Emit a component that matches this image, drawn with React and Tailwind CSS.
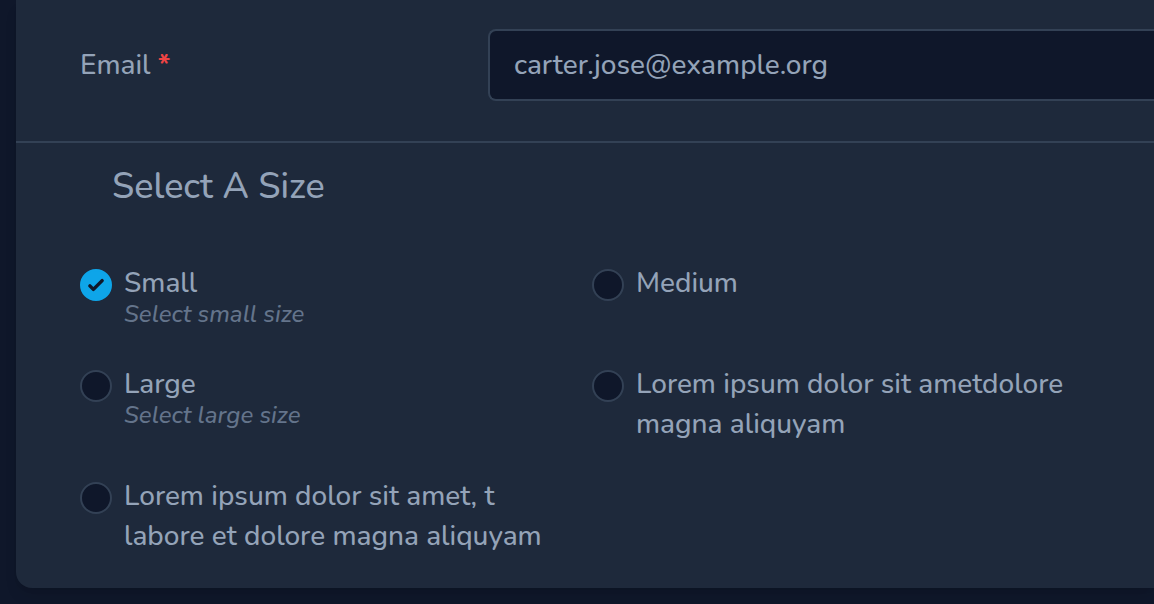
import React from "react";

const sizes = [
  { value: "small", label: "Small", help: "Select small size" },
  { value: "medium", label: "Medium" },
  { value: "large", label: "Large", help: "Select large size" },
  { value: "lorem-short", label: "Lorem ipsum dolor sit ametdolore magna aliquyam" },
  { value: "lorem-long", label: "Lorem ipsum dolor sit amet, t labore et dolore magna aliquyam" },
];

function SizeOption({ option, defaultChecked }) {
  return (
    <label className="flex items-start gap-3 pr-8 pb-8">
      <span className="mt-[6px] grid shrink-0 place-items-center">
        <input
          type="radio"
          name="size"
          value={option.value}
          defaultChecked={defaultChecked}
          className="peer col-start-1 row-start-1 size-8 appearance-none rounded-full border-2 border-[#334155] bg-[#0f172a] checked:border-[#0ea5e9] checked:bg-[#0ea5e9]"
        />
        <svg
          viewBox="0 0 16 16"
          aria-hidden="true"
          className="pointer-events-none invisible col-start-1 row-start-1 size-7 fill-[#0f172a] peer-checked:visible"
        >
          <path d="M12.207 4.793a1 1 0 010 1.414l-5 5a1 1 0 01-1.414 0l-2-2a1 1 0 011.414-1.414L6.5 9.086l4.293-4.293a1 1 0 011.414 0z" />
        </svg>
      </span>
      <span>
        <span className="block">{option.label}</span>
        {option.help && (
          <span className="block pb-[7px] text-2xl leading-[22px] text-[#64748b] italic">{option.help}</span>
        )}
      </span>
    </label>
  );
}

export default function App() {
  return (
    <main className="min-h-screen overflow-hidden bg-[#0f172a] pb-4 pl-4 font-['Nunito','Lato',sans-serif] text-[28px] leading-10 font-medium text-[#94a3b8]">
      <form className="rounded-bl-2xl bg-[#1e293b] shadow-lg">
        <div className="flex items-center border-b-2 border-[#334155] pt-[29px] pb-10 pl-16">
          <label htmlFor="email" className="w-[408px] shrink-0">
            Email <span className="font-bold text-[#ef4444]">*</span>
          </label>
          <input
            id="email"
            type="email"
            defaultValue="carter.jose@example.org"
            className="h-[72px] min-w-0 flex-1 rounded-l-lg border-2 border-r-0 border-[#334155] bg-[#0f172a] px-6 outline-none"
          />
        </div>
        <fieldset>
          <legend className="px-24 pt-5 pb-[52px] text-4xl leading-[48px]">Select A Size</legend>
          <div className="grid grid-cols-2 pr-[50px] pl-16">
            {sizes.map((option, i) => (
              <SizeOption key={option.value} option={option} defaultChecked={i === 0} />
            ))}
          </div>
        </fieldset>
      </form>
    </main>
  );
}
